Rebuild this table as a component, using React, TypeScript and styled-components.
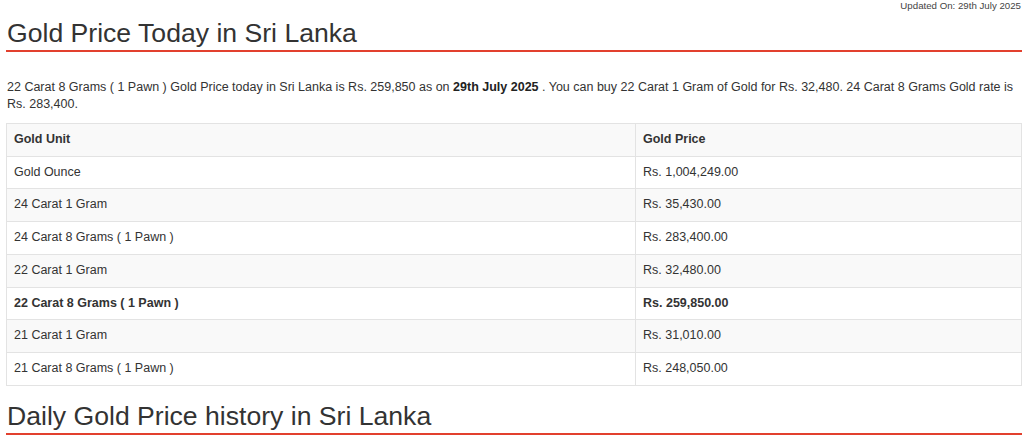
import React from "react";
import styled, { createGlobalStyle } from "styled-components";

const Global = createGlobalStyle`
  html, body { margin: 0; padding: 0; background: #fff; }
  body { font-family: "Liberation Sans", Arial, sans-serif; color: #333; }
`;

const Page = styled.div`
  padding: 0 2px 0 6px;
`;

const Updated = styled.div`
  text-align: right;
  font-size: 9.7px;
  line-height: 12px;
  color: #444;
  padding: 0 1px 0 0;
`;

const Heading = styled.h2`
  margin: 6px 0 0;
  padding: 0 1px 1px;
  font-weight: 400;
  font-size: 26.6px;
  line-height: 31px;
  color: #333;
  border-bottom: 2px solid #e2402e;
`;

const Para = styled.p`
  margin: 27px 0 0;
  padding: 0 1px;
  font-size: 12.5px;
  line-height: 17px;
  color: #333;
  b { font-weight: 700; color: #222; }
`;

const Table = styled.table`
  width: 100%;
  margin-top: 10px;
  border-collapse: collapse;
  font-size: 12.5px;
  color: #333;
`;

const Row = styled.tr<{ $shade: boolean }>`
  background: ${(p) => (p.$shade ? "#f9f9f9" : "#fff")};
`;

const Cell = styled.td<{ $bold?: boolean }>`
  border: 1px solid #e3e3e3;
  padding: 8px 7px;
  line-height: 15.7px;
  text-align: left;
  font-weight: ${(p) => (p.$bold ? 700 : 400)};
  vertical-align: middle;
  &:first-child { width: 614px; }
`;

const SubHeading = styled(Heading)`
  margin-top: 15px;
`;

const rows: [string, string, boolean?][] = [
  ["Gold Ounce", "Rs. 1,004,249.00"],
  ["24 Carat 1 Gram", "Rs. 35,430.00"],
  ["24 Carat 8 Grams ( 1 Pawn )", "Rs. 283,400.00"],
  ["22 Carat 1 Gram", "Rs. 32,480.00"],
  ["22 Carat 8 Grams ( 1 Pawn )", "Rs. 259,850.00", true],
  ["21 Carat 1 Gram", "Rs. 31,010.00"],
  ["21 Carat 8 Grams ( 1 Pawn )", "Rs. 248,050.00"],
];

export default function App() {
  return (
    <>
      <Global />
      <Page>
        <Updated>Updated On: 29th July 2025</Updated>
        <Heading>Gold Price Today in Sri Lanka</Heading>
        <Para>
          22 Carat 8 Grams ( 1 Pawn ) Gold Price today in Sri Lanka is Rs. 259,850 as on{" "}
          <b>29th July 2025</b> . You can buy 22 Carat 1 Gram of Gold for Rs. 32,480. 24 Carat 8
          Grams Gold rate is Rs. 283,400.
        </Para>
        <Table>
          <tbody>
            <Row $shade>
              <Cell $bold>Gold Unit</Cell>
              <Cell $bold>Gold Price</Cell>
            </Row>
            {rows.map(([u, p, b], i) => (
              <Row key={u} $shade={i % 2 === 1}>
                <Cell $bold={b}>{u}</Cell>
                <Cell $bold={b}>{p}</Cell>
              </Row>
            ))}
          </tbody>
        </Table>
        <SubHeading>Daily Gold Price history in Sri Lanka</SubHeading>
      </Page>
    </>
  );
}
